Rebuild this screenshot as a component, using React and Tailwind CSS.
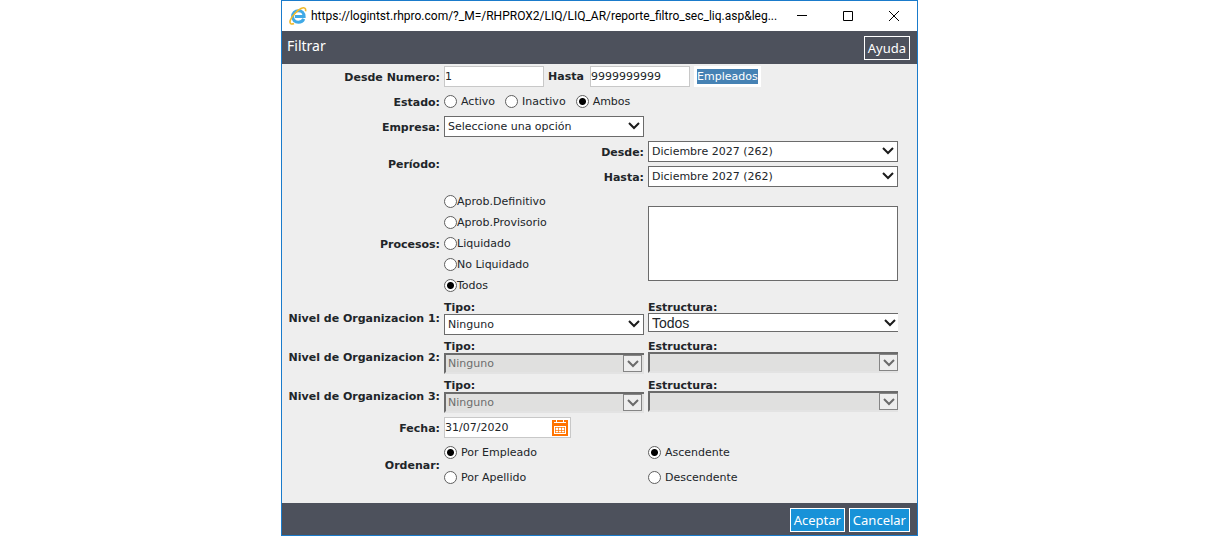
import React, { useState } from 'react';

const labelClass = 'pt-0.5 text-right font-bold';
const fieldClass = 'h-[21px] border border-[#c8c8c8] bg-white text-[11px] outline-none';

const Radio = ({ name, label, value, current, onChange, tight }) => (
  <label className={`flex h-[21px] items-center ${tight ? 'gap-0' : 'gap-1'}`}>
    <input
      type="radio"
      name={name}
      value={value}
      checked={current === value}
      onChange={() => onChange(value)}
      className="size-[13px] shrink-0 appearance-none rounded-full border border-[#5f5f5f] bg-white checked:bg-[radial-gradient(circle,#000_3px,#fff_4px)]"
    />
    <span>{label}</span>
  </label>
);

const Chevron = ({ className = '' }) => (
  <svg viewBox="0 0 12 8" className={`h-2 w-3 ${className}`} fill="none" stroke="currentColor" strokeWidth="2">
    <path d="M1 1l5 5 5-5" />
  </svg>
);

const Select = ({ id, options, clipped }) => (
  <div className="relative">
    <select
      id={id}
      className={`block w-full appearance-none border border-[#6b6b6b] bg-white px-[3px] text-[#212529] outline-none ${
        clipped
          ? "h-[19px] border-r-0 font-['Liberation_Sans',sans-serif] text-[14px]"
          : 'h-[21px] text-[11px]'
      }`}
    >
      {options.map((option) => (
        <option key={option}>{option}</option>
      ))}
    </select>
    <Chevron className={`pointer-events-none absolute top-1.5 text-[#1c1c1c] ${clipped ? 'right-0.5' : 'right-1'}`} />
  </div>
);

const DisabledSelect = ({ id, options, flush }) => (
  <div className="relative">
    <select
      id={id}
      disabled
      className="block h-[21px] w-full appearance-none border-t-2 border-b-2 border-l-2 border-t-[#6b6b6b] border-b-[#e3e3e3] border-l-[#6b6b6b] bg-[#e0e0df] px-0.5 text-[11px] text-[#6d6d6d] opacity-100"
    >
      {options.map((option) => (
        <option key={option}>{option}</option>
      ))}
    </select>
    <span
      className={`pointer-events-none absolute top-0.5 flex h-[17px] w-[19px] items-center justify-center border border-[#858585] bg-[#eee] text-[#6b6b6b] ${
        flush ? 'right-0' : 'right-0.5'
      }`}
    >
      <Chevron />
    </span>
  </div>
);

const NivelRow = ({ numero, disabled }) => (
  <>
    <span className={labelClass}>Nivel de Organizacion {numero}:</span>
    <div>
      <label htmlFor={`tipo${numero}`} className="block h-3.5 font-bold leading-4">Tipo:</label>
      {disabled ? (
        <DisabledSelect id={`tipo${numero}`} options={['Ninguno']} />
      ) : (
        <Select id={`tipo${numero}`} options={['Ninguno']} />
      )}
    </div>
    <div className="self-start">
      <label htmlFor={`estructura${numero}`} className="block h-[13px] font-bold leading-4">Estructura:</label>
      {disabled ? (
        <DisabledSelect id={`estructura${numero}`} options={[]} flush />
      ) : (
        <Select id={`estructura${numero}`} options={['Todos']} clipped />
      )}
    </div>
  </>
);

const CalendarIcon = () => (
  <svg viewBox="0 0 16 16" className="size-4">
    <path fill="#ff7300" d="M0 0h16v16H0z" />
    <path fill="#fff" d="M4 0h1v3H4zM11 0h1v3h-1zM5 2h6v1H5zM2 2h2v1H2zM12 2h2v1h-2zM2 6h12v8H2z" />
    <path stroke="#ff7300" strokeOpacity="0.7" fill="none" d="M3 7.500h10M3 10.500h10M3.500 7v6M6.500 7v6M9.500 7v6M12.500 7v6M3 12.500h10" />
  </svg>
);

const BrowserIcon = () => (
  <svg viewBox="0 0 18 18" className="size-[18px]" fill="none">
    <path
      d="M14.800 11.800C13.900 13.900 11.800 15.200 9.400 15.200 6 15.200 3.600 12.800 3.600 9.500S6 3.700 9.400 3.700s5.700 2.400 5.700 5.900H6"
      stroke="#3fa9e6"
      strokeWidth="3"
    />
    <path
      d="M5 16.500C2.300 17.800.2 16.800 1.300 13.300 2.700 9.300 7.800 3.600 12 1.500c3.200-1.500 5.300-.5 4.500 2.700"
      stroke="#f0b92a"
      strokeWidth="1.600"
    />
  </svg>
);

const TitleBar = () => (
  <div className="flex h-[30px] items-center bg-white pl-[7px] font-['Roboto',sans-serif] text-xs text-black">
    <BrowserIcon />
    <span className="ml-1 flex-1 whitespace-nowrap">https://logintst.rhpro.com/?_M=/RHPROX2/LIQ/LIQ_AR/reporte_filtro_sec_liq.asp&amp;leg...</span>
    <div className="flex">
      <button type="button" aria-label="Minimizar" className="flex h-[30px] w-[46px] items-center justify-center">
        <svg viewBox="0 0 10 10" className="size-2.5" stroke="#000"><path d="M0 4.500h10" /></svg>
      </button>
      <button type="button" aria-label="Maximizar" className="flex h-[30px] w-[46px] items-center justify-center">
        <svg viewBox="0 0 10 10" className="size-2.5" fill="none" stroke="#000"><path d="M.5.500h9v9h-9z" /></svg>
      </button>
      <button type="button" aria-label="Cerrar" className="flex h-[30px] w-[46px] items-center justify-center">
        <svg viewBox="0 0 10 10" className="size-2.5" stroke="#000"><path d="M0 0l10 10M10 0L0 10" /></svg>
      </button>
    </div>
  </div>
);

const barButton = 'flex h-6 items-center justify-center border border-white px-[3px] text-[13px] text-white';

const App = () => {
  const [estado, setEstado] = useState('ambos');
  const [proceso, setProceso] = useState('todos');
  const [orden, setOrden] = useState('empleado');
  const [sentido, setSentido] = useState('asc');

  return (
    <main className="pl-[281px] font-['DejaVu_Sans',sans-serif] text-[11px] leading-[14px] text-[#212529]">
      <div className="max-w-[637px] border border-[#1a7bcb]">
        <TitleBar />

        <header className="flex h-[33px] items-center justify-between bg-[#4d515c] pr-[7px] pl-[5px] font-['Noto_Sans',sans-serif] text-white">
          <h1 className="pb-[3px] text-sm">Filtrar</h1>
          <button type="button" className={barButton}>Ayuda</button>
        </header>

        <form className="grid grid-cols-[158px_200px_1fr] items-center gap-1 bg-[#eee] pt-0.5 pr-[19px] pb-[15px]">
          <label htmlFor="desde" className={labelClass}>Desde Numero:</label>
          <div className="col-span-2 flex items-center gap-1">
            <input id="desde" type="text" defaultValue="1" className={`w-[100px] ${fieldClass}`} />
            <label htmlFor="hasta" className="w-[38px] font-bold">Hasta</label>
            <input id="hasta" type="text" defaultValue="9999999999" className={`w-[100px] ${fieldClass}`} />
            <button type="button" className="h-[21px] bg-white px-[3px]">
              <span className="block bg-[#4682b4] leading-[15px] text-white">Empleados</span>
            </button>
          </div>

          <span className={labelClass}>Estado:</span>
          <div className="flex gap-2.5">
            <Radio name="estado" label="Activo" value="activo" current={estado} onChange={setEstado} />
            <Radio name="estado" label="Inactivo" value="inactivo" current={estado} onChange={setEstado} />
            <Radio name="estado" label="Ambos" value="ambos" current={estado} onChange={setEstado} />
          </div>
          <span />

          <label htmlFor="empresa" className={labelClass}>Empresa:</label>
          <Select id="empresa" options={['Seleccione una opción']} />
          <span />

          <span className={`row-span-2 ${labelClass}`}>Período:</span>
          <label htmlFor="periodoDesde" className={labelClass}>Desde:</label>
          <Select id="periodoDesde" options={['Diciembre 2027 (262)']} />
          <label htmlFor="periodoHasta" className={labelClass}>Hasta:</label>
          <Select id="periodoHasta" options={['Diciembre 2027 (262)']} />

          <span className={labelClass}>Procesos:</span>
          <div>
            <Radio tight name="proceso" label="Aprob.Definitivo" value="definitivo" current={proceso} onChange={setProceso} />
            <Radio tight name="proceso" label="Aprob.Provisorio" value="provisorio" current={proceso} onChange={setProceso} />
            <Radio tight name="proceso" label="Liquidado" value="liquidado" current={proceso} onChange={setProceso} />
            <Radio tight name="proceso" label="No Liquidado" value="noliquidado" current={proceso} onChange={setProceso} />
            <Radio tight name="proceso" label="Todos" value="todos" current={proceso} onChange={setProceso} />
          </div>
          <select multiple aria-label="Procesos" className="h-[75px] w-full appearance-none border border-[#6b6b6b] bg-white" />

          <NivelRow numero={1} />
          <NivelRow numero={2} disabled />
          <NivelRow numero={3} disabled />

          <label htmlFor="fecha" className={labelClass}>Fecha:</label>
          <div className="flex h-[21px] w-[127px] items-center border border-[#c8c8c8] bg-white pr-0.5">
            <input id="fecha" type="text" defaultValue="31/07/2020" className="w-full min-w-0 flex-1 text-[11px] outline-none" />
            <button type="button" aria-label="Calendario">
              <CalendarIcon />
            </button>
          </div>
          <span />

          <span className={labelClass}>Ordenar:</span>
          <div className="flex flex-col gap-1">
            <Radio name="orden" label="Por Empleado" value="empleado" current={orden} onChange={setOrden} />
            <Radio name="orden" label="Por Apellido" value="apellido" current={orden} onChange={setOrden} />
          </div>
          <div className="flex flex-col gap-1">
            <Radio name="sentido" label="Ascendente" value="asc" current={sentido} onChange={setSentido} />
            <Radio name="sentido" label="Descendente" value="desc" current={sentido} onChange={setSentido} />
          </div>
        </form>

        <footer className="flex justify-end gap-1 bg-[#4d515c] pt-[5px] pr-[7px] pb-[3px] font-['Noto_Sans',sans-serif]">
          <button type="button" className={`bg-[#1892d8] ${barButton}`}>Aceptar</button>
          <button type="button" className={`bg-[#1892d8] ${barButton}`}>Cancelar</button>
        </footer>
      </div>
    </main>
  );
};

export default App;
